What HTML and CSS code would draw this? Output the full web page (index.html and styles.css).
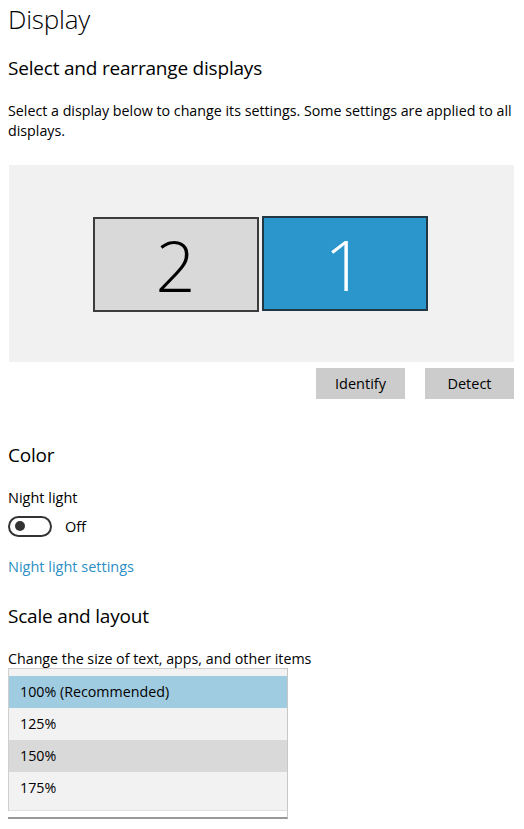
FILE: index.html
```html
<!DOCTYPE html>
<html>
<head>
<meta charset="utf-8">
<link rel="stylesheet" href="styles.css">
</head>
<body>
<div class="page">
  <h1 class="title">Display</h1>
  <h2 class="section first">Select and rearrange displays</h2>
  <p class="desc">Select a display below to change its settings. Some settings are applied to all displays.</p>
  <div class="arrange">
    <div class="monitors">
      <div class="monitor secondary">2</div>
      <div class="monitor primary">1</div>
    </div>
  </div>
  <div class="buttons">
    <button class="btn">Identify</button>
    <button class="btn">Detect</button>
  </div>

  <h2 class="section color">Color</h2>
  <div class="label">Night light</div>
  <div class="toggle-row">
    <span class="toggle"><span class="knob"></span></span>
    <span class="toggle-text">Off</span>
  </div>
  <a class="link">Night light settings</a>

  <h2 class="section scale">Scale and layout</h2>
  <div class="label small">Change the size of text, apps, and other items</div>
  <div class="list">
    <div class="list-inner">
      <div class="item selected">100% (Recommended)</div>
      <div class="item">125%</div>
      <div class="item hover">150%</div>
      <div class="item">175%</div>
      <div class="item tail"></div>
    </div>
  </div>
</div>
</body>
</html>
```

FILE: styles.css
```css
* { box-sizing: border-box; }
html, body { margin: 0; padding: 0; background: #fff; }
body {
  font-family: "Open Sans", "Noto Sans", sans-serif;
  color: #000;
  width: 524px;
  height: 829px;
  overflow: hidden;
}
.page { padding: 0 10px 0 8px; }
.title {
  margin: 0;
  padding-top: 1px;
  font-size: 26px;
  font-weight: 300;
  line-height: 36px;
  letter-spacing: -0.2px;
}
.section {
  margin: 0;
  font-weight: 400;
  font-size: 19px;
  line-height: 26px;
  letter-spacing: -0.2px;
}
.section.first { margin-top: 18px; }
.desc {
  margin: 20px 0 0 0;
  font-size: 14.25px;
  line-height: 20px;
}
.arrange {
  margin-top: 24px;
  margin-left: 1px;
  height: 197px;
  background: #f1f1f1;
  display: flex;
  justify-content: center;
  align-items: flex-start;
  padding-top: 51px;
}
.monitors {
  display: flex;
  align-items: flex-start;
  gap: 3px;
  margin-left: -3px;
}
.monitor {
  width: 166px;
  height: 95px;
  display: flex;
  align-items: center;
  justify-content: center;
  font-family: "Open Sans", sans-serif;
  font-weight: 300;
  font-size: 70px;
  line-height: 1;
}
.monitor.secondary {
  margin-top: 1px;
  background: #d9d9d9;
  border: 2px solid #3c3c3c;
  color: #000;
}
.monitor.primary {
  background: #2b96cc;
  border: 2px solid #223744;
  color: #fff;
}
.buttons {
  display: flex;
  justify-content: flex-end;
  gap: 20px;
  margin-top: 6px;
}
.btn {
  width: 89px;
  height: 31px;
  background: #cccccc;
  border: none;
  font-family: "Open Sans", sans-serif;
  font-size: 14.5px;
  color: #000;
  padding: 0;
}
.section.color { margin-top: 43px; }
.label {
  margin-top: 20px;
  font-size: 14.5px;
  line-height: 20px;
}
.toggle-row {
  display: flex;
  align-items: center;
  margin-top: 7px;
  height: 22px;
}
.toggle {
  width: 44px;
  height: 21px;
  border: 2px solid #333;
  border-radius: 11px;
  display: flex;
  align-items: center;
  padding-left: 5px;
}
.knob {
  width: 10px;
  height: 10px;
  border-radius: 50%;
  background: #333;
}
.toggle-text {
  margin-left: 13px;
  font-size: 14.5px;
}
.link {
  display: block;
  margin-top: 20px;
  font-size: 14.5px;
  line-height: 20px;
  color: #2d8fc4;
}
.section.scale { margin-top: 26px; }
.label.small { margin-top: 20px; font-size: 14.25px; }
.list {
  margin-top: -1px;
  width: 280px;
  border-right: 1px solid #c8c8c8;
  border-bottom: 2px solid #999;
  padding-bottom: 6px;
  background: #fff;
}
.list-inner {
  border-top: 1px solid #cfcfcf;
  border-left: 1px solid #cfcfcf;
  padding-top: 7px;
  background: #f2f2f2;
}
.item {
  height: 32px;
  line-height: 32px;
  padding-left: 11px;
  font-size: 14.25px;
  background: #f2f2f2;
}
.item.selected { background: #a0cce2; }
.item.hover { background: #d9d9d9; }
.item.tail { height: 7px; border-bottom: 1px solid #e0e0e0; }
```
